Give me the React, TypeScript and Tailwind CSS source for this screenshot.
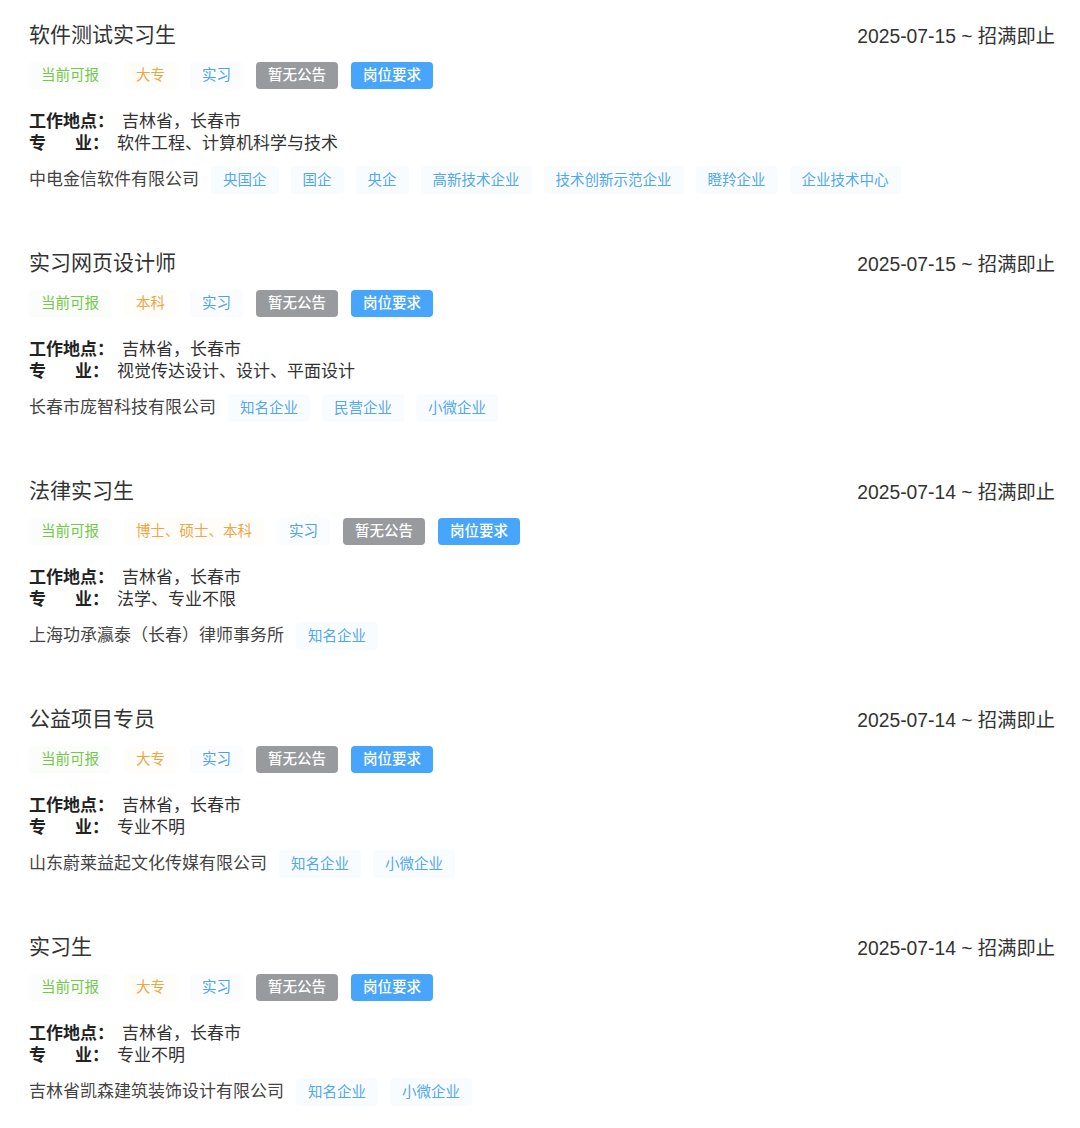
import React from 'react';

type Job = {
    title: string;
    date: string;
    edu: string;
    location: string;
    major: string;
    company: string;
    tags: string[];
};

const jobs: Job[] = [
    {
        title: '软件测试实习生',
        date: '2025-07-15',
        edu: '大专',
        location: '吉林省，长春市',
        major: '软件工程、计算机科学与技术',
        company: '中电金信软件有限公司',
        tags: ['央国企', '国企', '央企', '高新技术企业', '技术创新示范企业', '瞪羚企业', '企业技术中心'],
    },
    {
        title: '实习网页设计师',
        date: '2025-07-15',
        edu: '本科',
        location: '吉林省，长春市',
        major: '视觉传达设计、设计、平面设计',
        company: '长春市庞智科技有限公司',
        tags: ['知名企业', '民营企业', '小微企业'],
    },
    {
        title: '法律实习生',
        date: '2025-07-14',
        edu: '博士、硕士、本科',
        location: '吉林省，长春市',
        major: '法学、专业不限',
        company: '上海功承瀛泰（长春）律师事务所',
        tags: ['知名企业'],
    },
    {
        title: '公益项目专员',
        date: '2025-07-14',
        edu: '大专',
        location: '吉林省，长春市',
        major: '专业不明',
        company: '山东蔚莱益起文化传媒有限公司',
        tags: ['知名企业', '小微企业'],
    },
    {
        title: '实习生',
        date: '2025-07-14',
        edu: '大专',
        location: '吉林省，长春市',
        major: '专业不明',
        company: '吉林省凯森建筑装饰设计有限公司',
        tags: ['知名企业', '小微企业'],
    },
];

const JobCard = ({ job }: { job: Job }) => {
    return (
        <div className="pt-[20px] pb-[34px] pl-[29px] pr-[25px]">
            {/* title + date */}
            <div className="flex items-center justify-between h-[30px]">
                <h3 className="text-[21px] text-[#333] leading-[30px] font-normal">{job.title}</h3>
                <span className="text-[19.3px] text-[#333] leading-[30px] mt-[3px]">{job.date} ~ 招满即止</span>
            </div>

            {/* status tags */}
            <div className="flex items-center gap-[13px] mt-[12px] text-[14.5px] leading-[27px]">
                <span className="px-3 h-[27px] rounded-[4px] bg-[#fbfdfa] text-[#72c84a]">当前可报</span>
                <span className="px-3 h-[27px] rounded-[4px] bg-[#fffdfa] text-[#eda646]">{job.edu}</span>
                <span className="px-3 h-[27px] rounded-[4px] bg-[#fafcff] text-[#4ba3f2]">实习</span>
                <span className="px-3 h-[27px] rounded-[4px] bg-[#999a9e] text-white font-medium">暂无公告</span>
                <span className="px-3 h-[27px] rounded-[4px] bg-[#47a6fb] text-white font-medium">岗位要求</span>
            </div>

            {/* info */}
            <div className="mt-[22px] text-[17px] leading-[22px] text-[#333]">
                <p>
                    <b className="text-[#222]">工作地点：</b>
                    <span className="ml-[8px]">{job.location}</span>
                </p>
                <p>
                    <b className="text-[#222]">
                        <span className="mr-[29px]">专</span>业：
                    </b>
                    <span className="ml-[8px]">{job.major}</span>
                </p>
            </div>

            {/* company */}
            <div className="flex items-center gap-3 mt-[11px]">
                <span className="text-[17px] text-[#444] leading-[28px]">{job.company}</span>
                {job.tags.map((t) => (
                    <span
                        key={t}
                        className="px-3 h-[28px] leading-[28px] rounded-[4px] bg-[#f9fcff] text-[14.5px] text-[#52a8ec]"
                    >
                        {t}
                    </span>
                ))}
            </div>
        </div>
    );
};

export default function App() {
    return (
        <div
            className="w-[1080px] min-h-[1128px] bg-white"
            style={{ fontFamily: '"Liberation Sans", "Noto Sans CJK SC", sans-serif' }}
        >
            {jobs.map((job) => (
                <JobCard key={job.title} job={job} />
            ))}
        </div>
    );
}
